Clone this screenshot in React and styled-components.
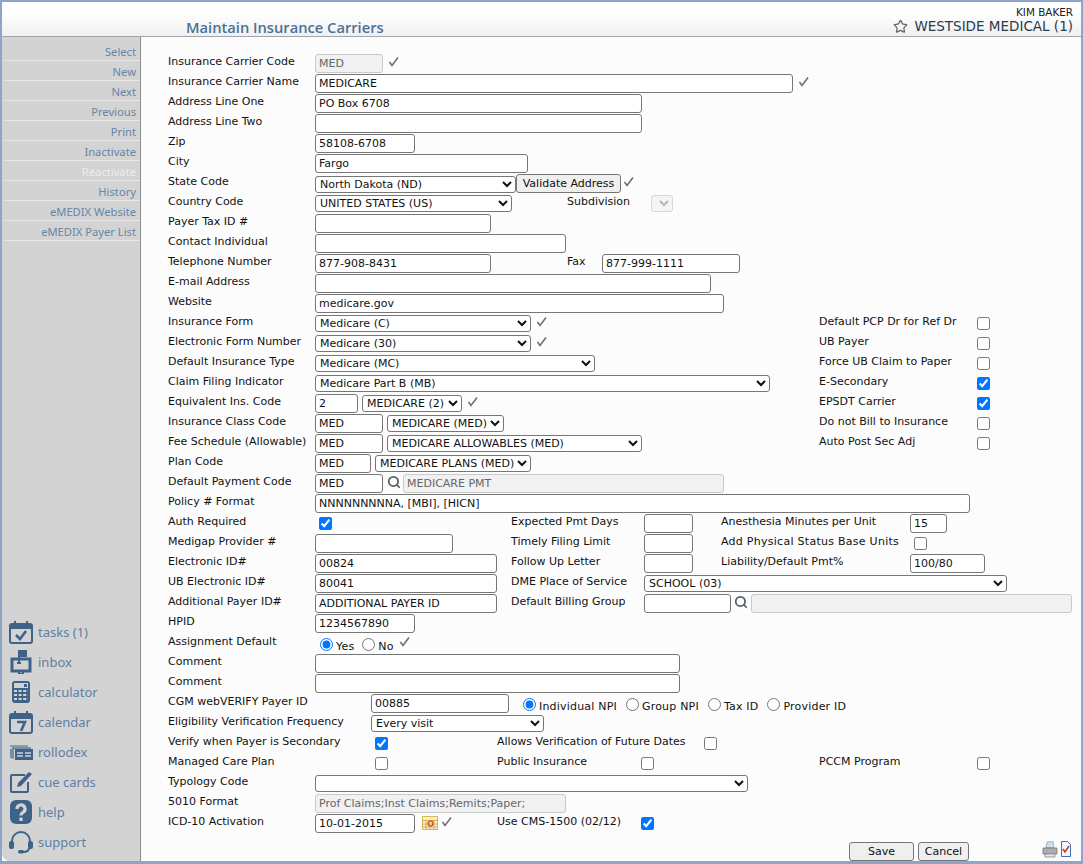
import React from 'react';
import styled, { createGlobalStyle } from 'styled-components';
import { Search, Star } from 'lucide-react';

const GlobalStyle = createGlobalStyle`
html, body {
  margin: 0;
  padding: 0;
  background: #fff;
}
* {
  box-sizing: border-box;
}
`

const Frame = styled.div`
width: 1083px;
height: 864px;
display: flex;
flex-direction: column;
border: solid #8ea5c5;
border-width: 2px 2px 3px 2px;
background: #fcfcfc;
overflow: hidden;
font-family: "DejaVu Sans", Verdana, sans-serif;
font-size: 11px;
color: #111;
`

const Header = styled.header`
height: 35px;
flex: none;
display: flex;
justify-content: space-between;
border-bottom: 1px solid #a3a5a8;
background: linear-gradient(#ffffff, #ffffff 30%, #eff0f1);
padding: 0 8px 0 184px;
`

const Title = styled.h1`
margin: 16px 0 0;
font-family: "Open Sans", sans-serif;
font-weight: 600;
font-size: 14.7px;
line-height: 18px;
color: #4e7096;
`

const Account = styled.div`
display: flex;
flex-direction: column;
align-items: flex-end;
padding-top: 5px;
`

const UserName = styled.div`
font-size: 10.4px;
line-height: 11px;
color: #222;
`

const Practice = styled.div`
display: flex;
align-items: center;
gap: 6px;
font-size: 13.5px;
line-height: 16px;
color: #2b3a4c;
`

const Body = styled.div`
flex: 1;
display: flex;
min-height: 0;
`

const Sidebar = styled.nav`
width: 139px;
flex: none;
display: flex;
flex-direction: column;
justify-content: space-between;
background: #d3d3d3;
border-right: 1px solid #8b8d90;
border-bottom-left-radius: 8px;
padding: 4px 0 4px 3px;
font-family: "Noto Sans", sans-serif;
`

const MenuList = styled.div`
display: flex;
flex-direction: column;
`

const MenuItem = styled.div`
height: 20px;
line-height: 21px;
text-align: right;
font-size: 11.2px;
padding-right: 4px;
border-bottom: 1px solid #e9e9e9;
color: ${props => props.$off ? '#ececec' : '#6685a8'};
`

const ToolList = styled.div`
display: flex;
flex-direction: column;
padding-left: 4px;
`

const Tool = styled.div`
height: 30px;
display: flex;
align-items: center;
gap: 5px;
font-size: 13px;
color: #5f7fa3;
`

const ToolIcon = styled.svg`
width: 24px;
height: 24px;
flex: none;
fill: none;
stroke: #3f6288;
stroke-width: 2;
`

const Main = styled.main`
flex: 1;
display: flex;
flex-direction: column;
padding: 16px 0 0 27px;
`

const Row = styled.div`
height: 20px;
display: flex;
align-items: flex-start;
`

const Column = styled.div`
width: ${props => props.$w}px;
flex: none;
display: flex;
align-items: flex-start;
`

const Label = styled.div`
width: ${props => props.$w || 147}px;
margin-left: ${props => props.$ml || 0}px;
flex: none;
padding-top: 1px;
line-height: 16px;
letter-spacing: ${props => props.$ls || 0}px;
white-space: nowrap;
`

const Field = styled.input`
width: ${props => props.$w}px;
height: 19px;
flex: none;
margin: 1px 0 0 ${props => props.$ml || 0}px;
padding: 0 3px;
border: 1px solid ${props => props.disabled ? '#c9c9c9' : '#767676'};
border-radius: 3px;
background: ${props => props.disabled ? '#f1f1f1' : '#fff'};
color: ${props => props.disabled ? '#666' : '#111'};
font: 11px "DejaVu Sans", Verdana, sans-serif;
outline: none;
`

const Picker = styled.select`
width: ${props => props.$w}px;
height: 17px;
flex: none;
margin: ${props => props.$mt || 2}px 0 0 ${props => props.$ml || 0}px;
padding: 0;
border: 1px solid ${props => props.disabled ? '#c9c9c9' : '#767676'};
border-radius: 3px;
background-color: ${props => props.disabled ? '#f1f1f1' : '#fff'};
color: ${props => props.disabled ? '#999' : '#111'};
font: 11px "DejaVu Sans", Verdana, sans-serif;
`

const Box = styled.input`
width: 13px;
height: 13px;
flex: none;
margin: 4px 0 0 ${props => props.$ml || 0}px;
accent-color: #0075ff;
`

const Choice = styled.label`
display: flex;
align-items: flex-start;
gap: 3px;
margin-left: ${props => props.$ml || 0}px;
`

const ChoiceDot = styled.input`
width: 13px;
height: 13px;
flex: none;
margin: 5px 0 0;
accent-color: #0075ff;
`

const ChoiceText = styled.span`
padding-top: 6px;
line-height: 16px;
letter-spacing: 0.2px;
white-space: nowrap;
`

const ActionButton = styled.button`
width: ${props => props.$w}px;
height: 19px;
flex: none;
margin: 1px 0 0 ${props => props.$ml || 0}px;
padding: 0;
border: 1px solid #767676;
border-radius: 3px;
background: #efefef;
color: #111;
font: 11px "DejaVu Sans", Verdana, sans-serif;
`

const Footer = styled.div`
display: flex;
align-items: flex-start;
margin-top: 8px;
padding-left: 681px;
`

const PrintIcons = styled.div`
display: flex;
gap: 3px;
margin-left: 73px;
`

const TickMark = styled.svg`
width: 11px;
height: 11px;
flex: none;
margin: 3px 0 0 ${props => props.$ml || 5}px;
fill: none;
stroke: #6f6f6f;
stroke-width: 1.6;
`

const Tick = ({ ml }) => (
    <TickMark $ml={ml} viewBox="0 0 11 11">
        <path d="M1.5 6 L4 9.5 L10 1.5" />
    </TickMark>
)

const Lens = styled(Search)`
flex: none;
margin: 2px 0 0 ${props => props.$ml}px;
color: #555f68;
`

const DateIcon = styled.svg`
width: 16px;
height: 14px;
flex: none;
margin: 3px 0 0 7px;
`

const TasksIcon = () => (
    <ToolIcon viewBox="0 0 24 24">
        <rect x="1" y="4" width="22" height="19" rx="2" />
        <path d="M1 7h22" strokeWidth="4" />
        <path d="M6 1v5M18 1v5" />
        <path d="M7 15l4 4 6-8" strokeWidth="2.6" />
    </ToolIcon>
)

const InboxIcon = () => (
    <ToolIcon viewBox="0 0 24 24">
        <path d="M3 9h18v12H3z" strokeWidth="3" />
        <path d="M10 12V1" />
        <path d="M10 1h7v5h-7z" fill="#3f6288" />
        <path d="M10 22v2h4v-2" strokeWidth="2" />
        <path d="M8 13h4" />
    </ToolIcon>
)

const CalculatorIcon = () => (
    <ToolIcon viewBox="0 0 24 24">
        <rect x="3" y="1" width="18" height="22" rx="3" fill="#3f6288" stroke="none" />
        <rect x="5" y="3" width="14" height="5" fill="#d3d3d3" stroke="none" />
        <rect x="15" y="4" width="3" height="3" fill="#3f6288" stroke="none" />
        <path d="M5 11h14M5 15h14M5 19h14" stroke="#d3d3d3" strokeWidth="2" strokeDasharray="3 1.6" />
    </ToolIcon>
)

const CalendarIcon = () => (
    <ToolIcon viewBox="0 0 24 24">
        <rect x="1" y="4" width="22" height="19" rx="2" />
        <path d="M1 7h22" strokeWidth="4" />
        <path d="M6 1v5M18 1v5" />
        <path d="M8 12h8l-4 9" strokeWidth="2.6" />
    </ToolIcon>
)

const RollodexIcon = () => (
    <ToolIcon viewBox="0 0 24 24">
        <path d="M1 6h18M2 9v9M4 8v11" strokeWidth="1.2" />
        <path d="M3 8h19" strokeWidth="1.2" />
        <rect x="6" y="9" width="18" height="11" fill="#3f6288" stroke="none" />
        <path d="M8 13h6M16 13h6M8 16h6M16 16h6" stroke="#d3d3d3" strokeWidth="1.4" />
    </ToolIcon>
)

const CueCardsIcon = () => (
    <ToolIcon viewBox="0 0 24 24">
        <path d="M16 5H3a1 1 0 0 0-1 1v15a1 1 0 0 0 1 1h15a1 1 0 0 0 1-1V12" />
        <path d="M8 17l1-4 11-11 3 2-11 12z" fill="#3f6288" stroke="none" />
    </ToolIcon>
)

const HelpIcon = () => (
    <ToolIcon viewBox="0 0 24 24">
        <rect x="1" y="0" width="22" height="24" rx="6" fill="#3f6288" stroke="none" />
        <path d="M8 9a4 4 0 1 1 6 3.4c-1.400.8-2 1.400-2 3" stroke="#d3d3d3" strokeWidth="3.200" />
        <path d="M12 17.500v3.500" stroke="#d3d3d3" strokeWidth="3.200" />
    </ToolIcon>
)

const SupportIcon = () => (
    <ToolIcon viewBox="0 0 24 24">
        <path d="M3 14V11a9 9 0 0 1 18 0v3" />
        <rect x="0" y="11" width="5" height="8" rx="2" fill="#3f6288" stroke="none" />
        <rect x="19" y="11" width="5" height="8" rx="2" fill="#3f6288" stroke="none" />
        <path d="M20 18c0 3-3 4-6 4" />
        <rect x="9" y="20" width="6" height="3.500" rx="1.700" fill="#3f6288" stroke="none" />
    </ToolIcon>
)

const menuItems = ['Select', 'New', 'Next', 'Previous', 'Print', 'Inactivate', 'Reactivate', 'History', 'eMEDIX Website', 'eMEDIX Payer List']

const tools = [
    ['tasks (1)', TasksIcon],
    ['inbox', InboxIcon],
    ['calculator', CalculatorIcon],
    ['calendar', CalendarIcon],
    ['rollodex', RollodexIcon],
    ['cue cards', CueCardsIcon],
    ['help', HelpIcon],
    ['support', SupportIcon],
]

const Pick = ({ w, ml, mt, value, disabled }) => (
    <Picker $w={w} $ml={ml} $mt={mt} disabled={disabled} defaultValue={value || ''}>
        <option value={value || ''}>{value || ''}</option>
    </Picker>
)

// the part of the insurance rows that has a flag on the right
const FlagRow = ({ label, flag, checked, children }) => (
    <Row>
        <Column $w={651}>
            <Label>{label}</Label>
            {children}
        </Column>
        <Label $w={158}>{flag}</Label>
        <Box type="checkbox" defaultChecked={checked} />
    </Row>
)

const App = () => {
    return (
        <Frame>
            <GlobalStyle />
            <Header>
                <Title>Maintain Insurance Carriers</Title>
                <Account>
                    <UserName>KIM BAKER</UserName>
                    <Practice>
                        <Star size={15} color="#666" strokeWidth={2} />
                        WESTSIDE MEDICAL (1)
                    </Practice>
                </Account>
            </Header>
            <Body>
                <Sidebar>
                    <MenuList>
                        {menuItems.map(item => (
                            <MenuItem key={item} $off={item === 'Reactivate'}>{item}</MenuItem>
                        ))}
                    </MenuList>
                    <ToolList>
                        {tools.map(([name, Icon]) => (
                            <Tool key={name}><Icon />{name}</Tool>
                        ))}
                    </ToolList>
                </Sidebar>
                <Main>
                    <Row><Label>Insurance Carrier Code</Label><Field $w={68} disabled defaultValue="MED" /><Tick /></Row>
                    <Row><Label>Insurance Carrier Name</Label><Field $w={478} defaultValue="MEDICARE" /><Tick /></Row>
                    <Row><Label>Address Line One</Label><Field $w={327} defaultValue="PO Box 6708" /></Row>
                    <Row><Label>Address Line Two</Label><Field $w={327} /></Row>
                    <Row><Label>Zip</Label><Field $w={100} defaultValue="58108-6708" /></Row>
                    <Row><Label>City</Label><Field $w={213} defaultValue="Fargo" /></Row>
                    <Row>
                        <Label>State Code</Label>
                        <Pick w={201} mt={3} value="North Dakota (ND)" />
                        <ActionButton $w={105}>Validate Address</ActionButton>
                        <Tick ml={2} />
                    </Row>
                    <Row>
                        <Label>Country Code</Label>
                        <Pick w={197} value="UNITED STATES (US)" />
                        <Label $w={84} $ml={55}>Subdivision</Label>
                        <Pick w={22} disabled />
                    </Row>
                    <Row><Label>Payer Tax ID #</Label><Field $w={176} /></Row>
                    <Row><Label>Contact Individual</Label><Field $w={251} /></Row>
                    <Row>
                        <Label>Telephone Number</Label>
                        <Field $w={176} defaultValue="877-908-8431" />
                        <Label $w={35} $ml={76}>Fax</Label>
                        <Field $w={138} defaultValue="877-999-1111" />
                    </Row>
                    <Row><Label>E-mail Address</Label><Field $w={396} /></Row>
                    <Row><Label>Website</Label><Field $w={409} defaultValue="medicare.gov" /></Row>
                    <FlagRow label="Insurance Form" flag="Default PCP Dr for Ref Dr">
                        <Pick w={216} value="Medicare (C)" /><Tick />
                    </FlagRow>
                    <FlagRow label="Electronic Form Number" flag="UB Payer">
                        <Pick w={216} value="Medicare (30)" /><Tick />
                    </FlagRow>
                    <FlagRow label="Default Insurance Type" flag="Force UB Claim to Paper">
                        <Pick w={280} value="Medicare (MC)" />
                    </FlagRow>
                    <FlagRow label="Claim Filing Indicator" flag="E-Secondary" checked>
                        <Pick w={455} value="Medicare Part B (MB)" />
                    </FlagRow>
                    <FlagRow label="Equivalent Ins. Code" flag="EPSDT Carrier" checked>
                        <Field $w={43} defaultValue="2" />
                        <Pick w={100} ml={4} value="MEDICARE (2)" /><Tick />
                    </FlagRow>
                    <FlagRow label="Insurance Class Code" flag="Do not Bill to Insurance">
                        <Field $w={68} defaultValue="MED" />
                        <Pick w={117} ml={4} value="MEDICARE (MED)" />
                    </FlagRow>
                    <FlagRow label="Fee Schedule (Allowable)" flag="Auto Post Sec Adj">
                        <Field $w={68} defaultValue="MED" />
                        <Pick w={255} ml={4} value="MEDICARE ALLOWABLES (MED)" />
                    </FlagRow>
                    <Row>
                        <Label>Plan Code</Label>
                        <Field $w={56} defaultValue="MED" />
                        <Pick w={156} ml={4} value="MEDICARE PLANS (MED)" />
                    </Row>
                    <Row>
                        <Label>Default Payment Code</Label>
                        <Field $w={68} defaultValue="MED" />
                        <Lens size={14} strokeWidth={3} $ml={4} />
                        <Field $w={321} $ml={2} disabled defaultValue="MEDICARE PMT" />
                    </Row>
                    <Row><Label>Policy # Format</Label><Field $w={655} defaultValue="NNNNNNNNNA, [MBI], [HICN]" /></Row>
                    <Row>
                        <Column $w={343}><Label>Auth Required</Label><Box type="checkbox" defaultChecked $ml={4} /></Column>
                        <Label $w={133}>Expected Pmt Days</Label>
                        <Field $w={49} />
                        <Label $w={189} $ml={28}>Anesthesia Minutes per Unit</Label>
                        <Field $w={37} defaultValue="15" />
                    </Row>
                    <Row>
                        <Column $w={343}><Label>Medigap Provider #</Label><Field $w={138} /></Column>
                        <Label $w={133}>Timely Filing Limit</Label>
                        <Field $w={49} />
                        <Label $w={189} $ml={28} $ls={0.27}>Add Physical Status Base Units</Label>
                        <Box type="checkbox" $ml={4} />
                    </Row>
                    <Row>
                        <Column $w={343}><Label>Electronic ID#</Label><Field $w={182} defaultValue="00824" /></Column>
                        <Label $w={133}>Follow Up Letter</Label>
                        <Field $w={49} />
                        <Label $w={189} $ml={28}>Liability/Default Pmt%</Label>
                        <Field $w={75} defaultValue="100/80" />
                    </Row>
                    <Row>
                        <Column $w={343}><Label>UB Electronic ID#</Label><Field $w={182} defaultValue="80041" /></Column>
                        <Label $w={133}>DME Place of Service</Label>
                        <Pick w={363} value="SCHOOL (03)" />
                    </Row>
                    <Row>
                        <Column $w={343}><Label>Additional Payer ID#</Label><Field $w={182} defaultValue="ADDITIONAL PAYER ID" /></Column>
                        <Label $w={133}>Default Billing Group</Label>
                        <Field $w={87} />
                        <Lens size={14} strokeWidth={3} $ml={3} />
                        <Field $w={321} $ml={3} disabled />
                    </Row>
                    <Row><Label>HPID</Label><Field $w={100} defaultValue="1234567890" /></Row>
                    <Row>
                        <Label>Assignment Default</Label>
                        <Choice $ml={5}><ChoiceDot type="radio" name="assign" defaultChecked /><ChoiceText>Yes</ChoiceText></Choice>
                        <Choice $ml={8}><ChoiceDot type="radio" name="assign" /><ChoiceText>No</ChoiceText></Choice>
                        <Tick />
                    </Row>
                    <Row><Label>Comment</Label><Field $w={365} /></Row>
                    <Row><Label>Comment</Label><Field $w={365} /></Row>
                    <Row>
                        <Label $w={203}>CGM webVERIFY Payer ID</Label>
                        <Field $w={138} defaultValue="00885" />
                        <Choice $ml={14}><ChoiceDot type="radio" name="npi" defaultChecked /><ChoiceText>Individual NPI</ChoiceText></Choice>
                        <Choice $ml={9}><ChoiceDot type="radio" name="npi" /><ChoiceText>Group NPI</ChoiceText></Choice>
                        <Choice $ml={9}><ChoiceDot type="radio" name="npi" /><ChoiceText>Tax ID</ChoiceText></Choice>
                        <Choice $ml={9}><ChoiceDot type="radio" name="npi" /><ChoiceText>Provider ID</ChoiceText></Choice>
                    </Row>
                    <Row><Label $w={203}>Eligibility Verification Frequency</Label><Pick w={173} value="Every visit" /></Row>
                    <Row>
                        <Column $w={329}><Label $w={207}>Verify when Payer is Secondary</Label><Box type="checkbox" defaultChecked /></Column>
                        <Label $w={207}>Allows Verification of Future Dates</Label>
                        <Box type="checkbox" />
                    </Row>
                    <Row>
                        <Column $w={329}><Label $w={207}>Managed Care Plan</Label><Box type="checkbox" /></Column>
                        <Label $w={144}>Public Insurance</Label>
                        <Box type="checkbox" />
                        <Label $w={158} $ml={165}>PCCM Program</Label>
                        <Box type="checkbox" />
                    </Row>
                    <Row><Label>Typology Code</Label><Pick w={433} /></Row>
                    <Row><Label>5010 Format</Label><Field $w={251} disabled defaultValue="Prof Claims;Inst Claims;Remits;Paper;" /></Row>
                    <Row>
                        <Column $w={329}>
                            <Label>ICD-10 Activation</Label>
                            <Field $w={100} defaultValue="10-01-2015" />
                            <DateIcon viewBox="0 0 16 14">
                                <rect x="0.500" y="0.500" width="15" height="13" fill="#fbf0c4" stroke="#d9b95c" />
                                <path d="M0 4.500h16M0 8h16M0 11h16M4 4v10M8 4v10M12 4v10" stroke="#c9a24a" strokeWidth="0.800" />
                                <circle cx="8.500" cy="7.500" r="2.500" fill="none" stroke="#c8402a" strokeWidth="1.200" />
                            </DateIcon>
                            <Tick ml={3} />
                        </Column>
                        <Label $w={144}>Use CMS-1500 (02/12)</Label>
                        <Box type="checkbox" defaultChecked />
                    </Row>
                    <Footer>
                        <ActionButton $w={65}>Save</ActionButton>
                        <ActionButton $w={51} $ml={4}>Cancel</ActionButton>
                        <PrintIcons>
                            <svg width="16" height="17" viewBox="0 0 16 17">
                                <path d="M5 1l6-0.500 1 6H4z" fill="#cfe0ee" stroke="#8aa5bd" strokeWidth="0.800" />
                                <path d="M1 7h14v6H1z" fill="#a9aeb3" stroke="#777" strokeWidth="0.800" />
                                <path d="M3 13h10v3H3z" fill="#e4e6e8" stroke="#888" strokeWidth="0.800" />
                            </svg>
                            <svg width="10" height="16" viewBox="0 0 10 16">
                                <path d="M0.500 0.500h6l3 3v12h-9z" fill="#f4f8fc" stroke="#3f6fb0" />
                                <path d="M2 8l2 3 4-6" fill="none" stroke="#d02a2a" strokeWidth="1.500" />
                            </svg>
                        </PrintIcons>
                    </Footer>
                </Main>
            </Body>
        </Frame>
    )
}

export default App;
